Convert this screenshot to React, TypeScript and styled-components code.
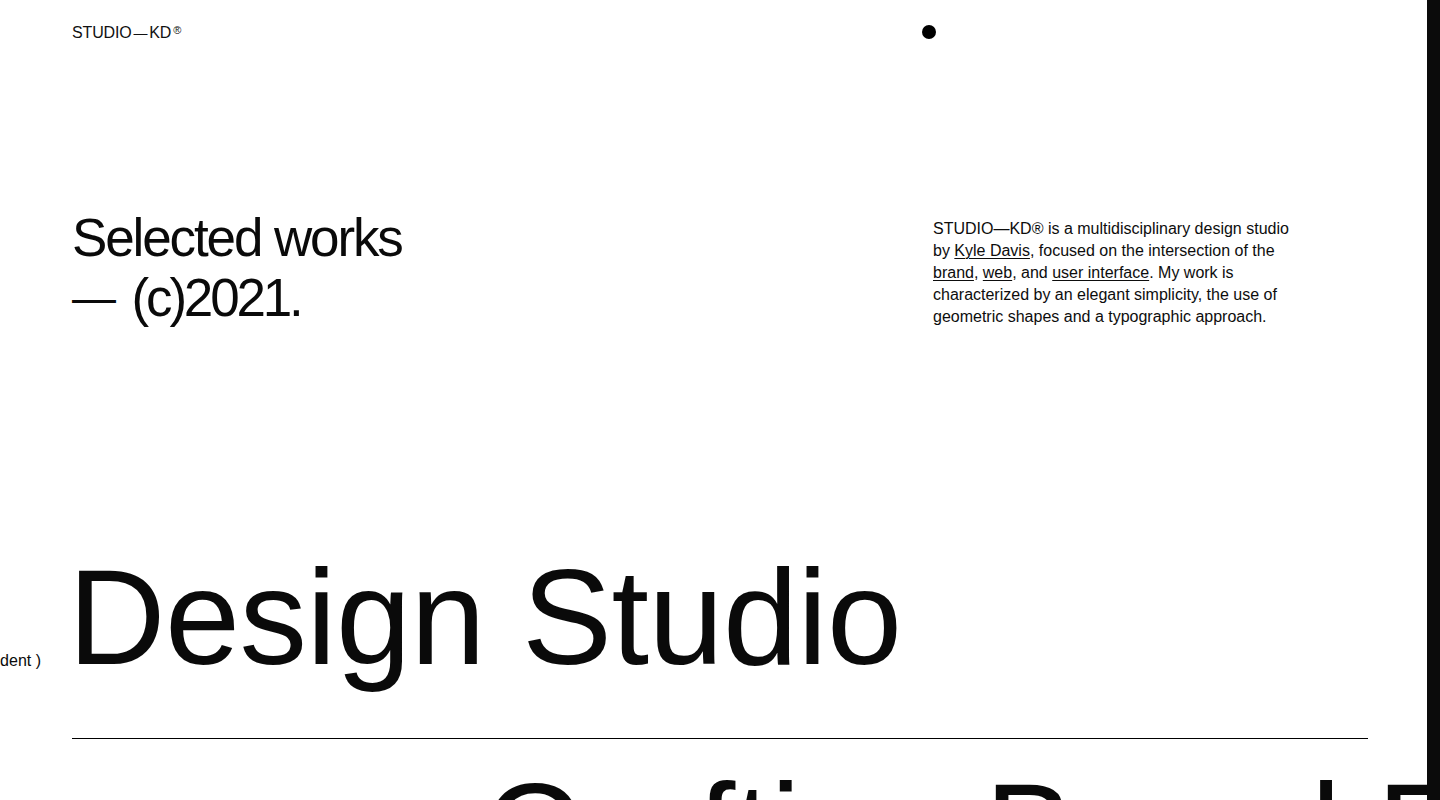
import React from 'react';
import styled, { createGlobalStyle } from 'styled-components';

const GlobalStyle = createGlobalStyle`
  html, body {
    margin: 0;
    padding: 0;
    background: #ffffff;
    color: #0a0a0a;
    font-family: 'Liberation Sans', Arial, Helvetica, sans-serif;
    overflow: hidden;
  }
  * {
    box-sizing: border-box;
  }
`;

const App: React.FC = () => {
  return (
    <>
      <GlobalStyle />
      <Page>
        <Header>
          <Logo>
            STUDIO<LogoDash>—</LogoDash>KD<Reg>®</Reg>
          </Logo>
          <Dot />
        </Header>

        <Intro>
          <Title>
            Selected works
            <br />
            <TitleDash>—</TitleDash> <Year>(c)2021.</Year>
          </Title>
          <About>
            STUDIO—KD® is a multidisciplinary design studio
            <br />
            by <TextLink href="#">Kyle Davis</TextLink>, focused on the intersection of the
            <br />
            <TextLink href="#">brand</TextLink>, <TextLink href="#">web</TextLink>, and{' '}
            <TextLink href="#">user interface</TextLink>. My work is
            <br />
            characterized by an elegant simplicity, the use of
            <br />
            geometric shapes and a typographic approach.
          </About>
        </Intro>

        <HeroRow>
          <SideLabel>( Independent )</SideLabel>
          <Hero>Design Studio</Hero>
        </HeroRow>

        <Rule />

        <Marquee>
          <MarqueeText>Crafting Brand Experiences</MarqueeText>
        </Marquee>
      </Page>
      <ScrollBar />
    </>
  );
};

const Page = styled.main`
  height: 100vh;
  overflow: hidden;
  padding: 20px 72px 0;
`;

const Header = styled.header`
  display: grid;
  grid-template-columns: 850px 1fr;
  align-items: center;
  height: 20px;
`;

const Logo = styled.div`
  font-size: 16px;
  line-height: 20px;
  letter-spacing: -0.01em;
  color: #111;
`;

const LogoDash = styled.span`
  display: inline-block;
  margin: 0 2px;
  font-size: 14px;
`;

const Reg = styled.span`
  font-size: 11px;
  vertical-align: 4px;
  margin-left: 2px;
`;

const Dot = styled.span`
  width: 14px;
  height: 14px;
  border-radius: 50%;
  background: #000;
`;

const Intro = styled.section`
  margin-top: 168px;
  display: grid;
  grid-template-columns: 861px 1fr;
  align-items: start;
`;

const Title = styled.h1`
  margin: 0;
  font-size: 53px;
  line-height: 60px;
  font-weight: 400;
  letter-spacing: -0.04em;
`;

const TitleDash = styled.span`
  font-size: 44px;
  letter-spacing: 0;
  vertical-align: 3px;
  margin-right: 3px;
`;

const Year = styled.span`
  letter-spacing: -0.06em;
`;

const About = styled.p`
  margin: 10px 0 0;
  font-size: 16px;
  line-height: 22px;
  white-space: nowrap;
  color: #0d0d0d;
`;

const TextLink = styled.a`
  color: inherit;
  text-decoration: underline;
  text-decoration-thickness: 1px;
  text-underline-offset: 2px;
`;

const HeroRow = styled.div`
  position: relative;
  margin-top: 222px;
`;

const SideLabel = styled.span`
  position: absolute;
  right: calc(100% + 31px);
  bottom: 14px;
  font-size: 16px;
  line-height: 20px;
  white-space: nowrap;
`;

const Hero = styled.h2`
  margin: 0 0 0 -4px;
  font-size: 135px;
  line-height: 135px;
  font-weight: 400;
  letter-spacing: -0.004em;
  white-space: nowrap;
`;

const Rule = styled.hr`
  display: block;
  margin: 53px 0 0;
  border: 0;
  height: 1px;
  background: #000;
`;

const Marquee = styled.div`
  margin-top: 25px;
  white-space: nowrap;
`;

const MarqueeText = styled.span`
  display: inline-block;
  padding-left: 411px;
  font-size: 135px;
  line-height: 135px;
  letter-spacing: -0.007em;
`;

const ScrollBar = styled.div`
  position: fixed;
  top: 0;
  right: 0;
  width: 13px;
  height: 100vh;
  background: #0b0b0b;
`;

export default App;
